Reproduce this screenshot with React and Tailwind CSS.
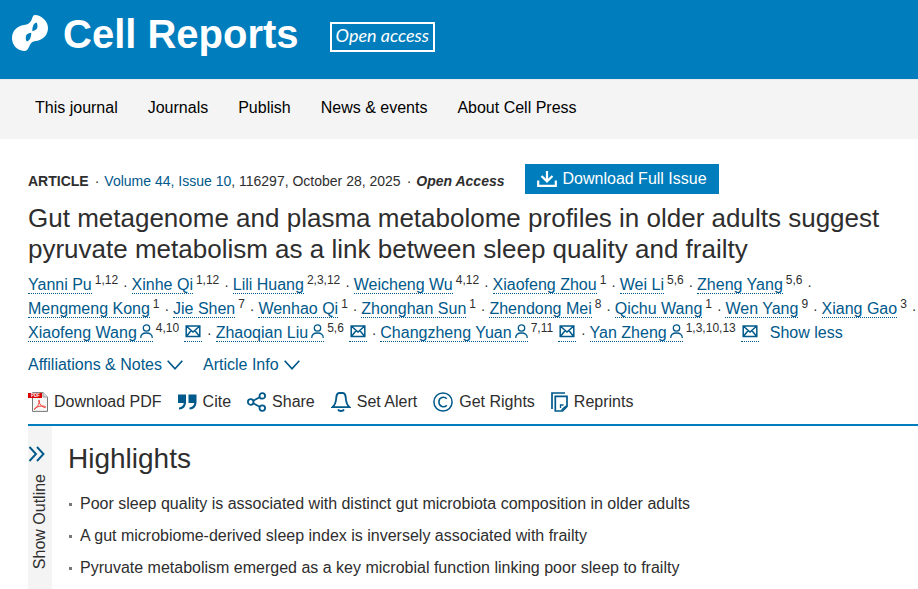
import { Fragment } from 'react';

const navLinks = ['This journal', 'Journals', 'Publish', 'News & events', 'About Cell Press'];

const authors = [
  { name: 'Yanni Pu', refs: '1,12' },
  { name: 'Xinhe Qi', refs: '1,12' },
  { name: 'Lili Huang', refs: '2,3,12' },
  { name: 'Weicheng Wu', refs: '4,12' },
  { name: 'Xiaofeng Zhou', refs: '1' },
  { name: 'Wei Li', refs: '5,6' },
  { name: 'Zheng Yang', refs: '5,6' },
  { name: 'Mengmeng Kong', refs: '1' },
  { name: 'Jie Shen', refs: '7' },
  { name: 'Wenhao Qi', refs: '1' },
  { name: 'Zhonghan Sun', refs: '1' },
  { name: 'Zhendong Mei', refs: '8' },
  { name: 'Qichu Wang', refs: '1' },
  { name: 'Wen Yang', refs: '9' },
  { name: 'Xiang Gao', refs: '3' },
  { name: 'Xiaofeng Wang', refs: '4,10', contact: true },
  { name: 'Zhaoqian Liu', refs: '5,6', contact: true },
  { name: 'Changzheng Yuan', refs: '7,11', contact: true },
  { name: 'Yan Zheng', refs: '1,3,10,13', contact: true },
];

const highlights = [
  'Poor sleep quality is associated with distinct gut microbiota composition in older adults',
  'A gut microbiome-derived sleep index is inversely associated with frailty',
  'Pyruvate metabolism emerged as a key microbial function linking poor sleep to frailty',
];

const LogoMark = () => (
  <svg width="36" height="36" viewBox="0 0 36 36" fill="#fff" aria-hidden="true">
    <path
      fillRule="evenodd"
      d="M23 0C29 0 36 6 36 13C36 20 31 25 24 26C20 26.500 19 28 17.500 31C16 34 15 36 12 36C5 35.500 0 30 0 23C0 16 5 11 12 10C16 9.500 18 8 19.500 5C20.500 2 21 0 23 0ZM24.500 7.500C21.500 8.500 20.500 11 20.300 16.300C23.500 15.500 25.500 14 25.500 11.500C25.500 10 25.300 8.500 24.500 7.500ZM19.300 17.800C16 18.200 14 19.500 13.800 22C13.600 24 14 25.500 15 26.500C18 25.500 19 22.500 19.300 17.800Z"
    />
  </svg>
);

const DownloadIcon = () => (
  <svg width="20" height="16" viewBox="0 0 20 16" fill="none" stroke="currentColor" strokeWidth="2.200" aria-hidden="true">
    <path d="M10 0V10M4.500 5L10 10.400L15.500 5M1.200 9.500V14.800H18.800V9.500" />
  </svg>
);

const PersonIcon = () => (
  <svg className="inline-block align-baseline ml-[3px]" width="13" height="14" viewBox="0 0 13 14" fill="none" stroke="currentColor" strokeWidth="1.300" aria-hidden="true">
    <circle cx="6.500" cy="4" r="3.200" />
    <path d="M0.700 14C0.700 10.500 3 9 6.500 9S12.300 10.500 12.300 14" />
  </svg>
);

const MailIcon = () => (
  <svg className="inline-block align-baseline" width="16" height="13" viewBox="0 0 16 13" fill="none" stroke="currentColor" strokeWidth="1.500" aria-hidden="true">
    <path d="M1.200 1H14.800V11.500H1.200ZM1.500 1.300L8 7L14.500 1.300M1.500 11.200L6 5.800M14.500 11.200L10 5.800" />
  </svg>
);

const ChevronIcon = () => (
  <svg width="16" height="10" viewBox="0 0 16 10" fill="none" stroke="currentColor" strokeWidth="1.700" aria-hidden="true">
    <path d="M0.700 0.700L8 8.700L15.300 0.700" />
  </svg>
);

const PdfIcon = () => (
  <svg width="20" height="20" viewBox="0 0 20 20" fill="none" aria-hidden="true">
    <path d="M4.500 0.600H15L19.500 5V19.400H4.500Z" fill="#f6f6f6" stroke="#777" />
    <path d="M15 0.600V5H19.500" fill="#ddd" stroke="#888" strokeWidth="0.800" />
    <rect y="1" width="14" height="5" fill="#d90000" />
    <text x="3" y="5" fill="#fff" fontSize="4.500" fontWeight="700" fontFamily="Liberation Sans, sans-serif">PDF</text>
    <path d="M6 17.500C8 17 12 11 11.500 8.500C11 7.500 10.300 8.500 10.800 9.800C11.800 12.500 14.500 15.500 17 15.500C19 15 16.500 13.800 13.500 14C10.500 14.200 7.500 15.500 6.300 16.800" stroke="#f0403a" />
  </svg>
);

const CiteIcon = () => (
  <svg width="19" height="16" viewBox="0 0 19 16" fill="#00598b" aria-hidden="true">
    <path d="M0 0.500H8V8C8 12.500 5.500 15.500 1 15.500V13.500C3.800 13 5.500 11.500 5.800 9H0ZM10.500 0.500H18.500V8C18.500 12.500 16 15.500 11.500 15.500V13.500C14.300 13 16 11.500 16.300 9H10.500Z" />
  </svg>
);

const ShareIcon = () => (
  <svg width="19" height="20" viewBox="0 0 19 20" fill="none" stroke="#00598b" strokeWidth="1.800" aria-hidden="true">
    <circle cx="3.700" cy="10" r="2.800" />
    <circle cx="15.300" cy="3.900" r="2.800" />
    <circle cx="15.300" cy="16.100" r="2.800" />
    <path d="M6.300 8.700L12.700 5.300M6.300 11.300L12.700 14.700" />
  </svg>
);

const BellIcon = () => (
  <svg width="20" height="20" viewBox="0 0 20 20" fill="none" stroke="#00598b" strokeWidth="1.800" aria-hidden="true">
    <path d="M1.500 15.200C3.500 13.500 4.600 11.500 5 8C5.300 4 5.500 1 8 1H12C14.500 1 14.700 4 15 8C15.400 11.500 16.500 13.500 18.500 15.200Z" />
    <path d="M7 17.500C8 19.500 12 19.500 13 17.500" />
  </svg>
);

const RightsIcon = () => (
  <svg width="20" height="20" viewBox="0 0 20 20" fill="none" stroke="#00598b" strokeWidth="1.500" aria-hidden="true">
    <circle cx="10" cy="10" r="9.100" />
    <path d="M13.800 6.800C11.300 4 5.900 5 5.900 10S11.300 16 13.800 13.200" />
  </svg>
);

const ReprintsIcon = () => (
  <svg width="17" height="20" viewBox="0 0 17 20" fill="none" stroke="#00598b" strokeWidth="1.700" aria-hidden="true">
    <path d="M1 17V1H14" />
    <path d="M4.300 4.300H16V14.500L11.500 19H4.300Z" />
    <path d="M9.500 16V13H12.500M11 18.500V17.500L14.500 14.500H16" strokeWidth="1.300" />
  </svg>
);

const tools = [
  { label: 'Download PDF', Icon: PdfIcon },
  { label: 'Cite', Icon: CiteIcon },
  { label: 'Share', Icon: ShareIcon },
  { label: 'Set Alert', Icon: BellIcon },
  { label: 'Get Rights', Icon: RightsIcon },
  { label: 'Reprints', Icon: ReprintsIcon },
];

// One author: name, affiliation numbers and, for the lead contacts, a mail link
const Author = ({ name, refs, contact }) => (
  <span className="whitespace-nowrap">
    <a href="#" className="text-[#00598b] border-b border-dotted border-[#00598b]">
      {name}
      {contact && <PersonIcon />}
    </a>
    <sup className="ml-[3px] text-xs leading-none">{refs}</sup>
    {contact && (
      <a href="#" aria-label={`Email ${name}`} className="ml-[5px] px-px text-[#00598b] border-b border-dotted border-[#00598b]">
        <MailIcon />
      </a>
    )}
  </span>
);

const App = () => (
  <div className="min-h-screen bg-white text-[#2e2e2e] text-base font-['Liberation_Sans',Arial,sans-serif]">
    <header className="flex items-start h-[79px] pl-3 pt-[15px] bg-[#007dbc] text-white">
      <a href="#" className="flex items-start">
        <LogoMark />
        <span className="ml-[15px] text-[40px] leading-[38px] font-bold">Cell Reports</span>
      </a>
      <span className="ml-[31px] mt-[7px] px-1 pb-1 border-2 border-white text-lg leading-[22px] italic font-['Lato',sans-serif]">Open access</span>
    </header>

    <nav className="flex gap-[30px] h-[60px] pl-[35px] pt-4 bg-[#f4f4f4] border-t border-[#ebebeb] text-black">
      {navLinks.map((label) => (
        <a key={label} href="#" className="leading-6 hover:underline">{label}</a>
      ))}
    </nav>

    <main className="pl-7 pt-[25px]">
      <div className="flex items-center text-sm">
        <p className="pt-1">
          <span className="font-bold">ARTICLE</span>
          <span className="ml-[6px] mr-[5px]">·</span>
          <a href="#" className="text-[#00598b]">Volume 44, Issue 10</a>, 116297, October 28, 2025
          <span className="ml-[6px] mr-[5px]">·</span>
          <span className="font-bold italic">Open Access</span>
        </p>
        <button type="button" className="flex items-center gap-[6px] h-[30px] ml-5 px-3 bg-[#007dbc] text-base text-white">
          <DownloadIcon />
          Download Full Issue
        </button>
      </div>

      <h1 className="mt-[9px] text-[26px] leading-[31px]">
        Gut metagenome and plasma metabolome profiles in older adults suggest pyruvate metabolism as a link between sleep quality and frailty
      </h1>

      <p className="mt-2 leading-6">
        {authors.map((author, index) => (
          <Fragment key={author.name}>
            <Author {...author} />
            {index < authors.length - 1 && <span className="ml-px text-sm leading-none"> · </span>}
          </Fragment>
        ))}
        <button type="button" className="ml-[11px] text-[#00598b]">Show less</button>
      </p>

      <div className="flex gap-5 mt-2 text-[#00598b]">
        <button type="button" className="flex items-center gap-[5px] leading-6">Affiliations & Notes <ChevronIcon /></button>
        <button type="button" className="flex items-center gap-[5px] leading-6">Article Info <ChevronIcon /></button>
      </div>

      <div className="flex gap-4 mt-[13px] pb-[10px] border-b-2 border-[#007dbc]">
        {tools.map(({ label, Icon }) => (
          <button key={label} type="button" className="flex items-center gap-[6px] leading-6">
            <Icon />
            {label}
          </button>
        ))}
      </div>

      <div className="flex gap-4">
        <button type="button" className="flex flex-col items-center w-6 pt-5 pb-5 gap-3 bg-[#f4f4f4]">
          <svg className="self-start" width="18" height="16" viewBox="0 0 18 16" fill="none" stroke="#00598b" strokeWidth="1.900" aria-hidden="true">
            <path d="M1.500 1L8 8L1.500 15M9 1L15.500 8L9 15" />
          </svg>
          <span className="rotate-180 leading-6 [writing-mode:vertical-rl]">Show Outline</span>
        </button>
        <section>
          <h2 className="mt-[17px] text-[28px] leading-8">Highlights</h2>
          <ul className="mt-[17px]">
            {highlights.map((text) => (
              <li key={text} className="flex items-center gap-2 pl-px mb-2 leading-6">
                <span className="size-[3px] bg-[#777]" />
                {text}
              </li>
            ))}
          </ul>
        </section>
      </div>
    </main>
  </div>
);

export default App;
